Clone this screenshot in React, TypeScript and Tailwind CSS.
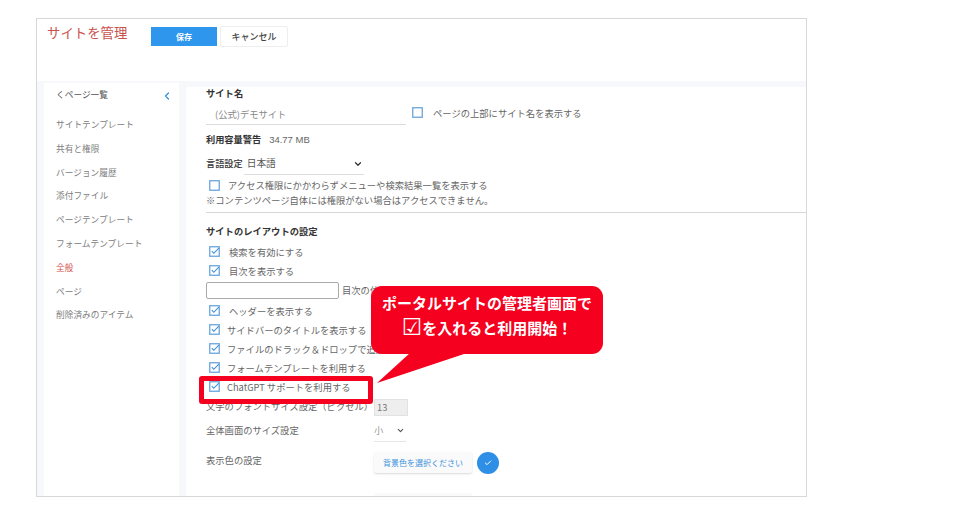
import React from "react";
import { ChevronDown, ChevronLeft, Check } from "lucide-react";

const sideItems = [
  { label: "サイトテンプレート" },
  { label: "共有と権限" },
  { label: "バージョン履歴" },
  { label: "添付ファイル" },
  { label: "ページテンプレート" },
  { label: "フォームテンプレート" },
  { label: "全般", active: true },
  { label: "ページ" },
  { label: "削除済みのアイテム" },
];

const font = "font-['Noto_Sans_CJK_JP','Liberation_Sans',sans-serif]";

// Outlined checkbox, ticked or empty
function Box({ checked = false }: { checked?: boolean }) {
  return (
    <svg width="11" height="11" viewBox="0 0 11 11" className="shrink-0">
      <rect x="0.75" y="0.75" width="9.5" height="9.5" fill="#fff" stroke="#6aa6dc" strokeWidth="1.3" />
      {checked && <path d="M2.8 5.2 L4.8 7.3 L9.8 2.2" fill="none" stroke="#3d8fd8" strokeWidth="1.1" />}
    </svg>
  );
}

function CheckRow({ label, gap }: { label: string; gap: string }) {
  return (
    <div className={`flex items-center h-[19px] pl-[3px] ${gap} text-[9.3px] text-[#666] whitespace-nowrap`}>
      <div className="-mt-[3px] flex">
        <Box checked />
      </div>
      <span>{label}</span>
    </div>
  );
}

export default function App() {
  return (
    <div className={`relative w-[971px] h-[527px] bg-white overflow-hidden ${font}`}>
      <div className="pt-[18px] pl-[36px]">
        <div className="w-[771px] h-[479px] border border-[#d8d8d8] bg-[#f6f8fc] overflow-hidden">
          {/* Header */}
          <div className="h-[62px] bg-white flex items-start pl-[10px] pt-[7px]">
            <h1 className="text-[13.4px] leading-[18px] -mt-[3px] text-[#c9524c] w-[104px]">サイトを管理</h1>
            <button className="mt-[1px] w-[66px] h-[19px] bg-[#2f96ee] text-white text-[8px] font-bold">保存</button>
            <button className="ml-[3px] w-[68px] h-[21px] bg-white border border-[#eeeeee] rounded-[2px] text-[#444] text-[9px] font-medium">
              キャンセル
            </button>
          </div>

          <div className="flex pt-[2px] pl-[7px] h-[416px]">
            {/* Sidebar */}
            <aside className="w-[135px] bg-white shrink-0 pl-[12px]">
              <div className="flex items-center justify-between h-[24px] pr-[6px] text-[8.7px] text-[#555]">
                <span>くページ一覧</span>
                <ChevronLeft size={12} strokeWidth={2.5} className="text-[#2f8fe0] mt-[2px]" />
              </div>
              <ul className="mt-[6px]">
                {sideItems.map((item) => (
                  <li
                    key={item.label}
                    className={`h-[23.8px] leading-[23.8px] text-[8.7px] ${item.active ? "text-[#d0504a]" : "text-[#808080]"}`}
                  >
                    {item.label}
                  </li>
                ))}
              </ul>
            </aside>

            {/* Main settings */}
            <main className="flex-1 ml-[7px] mt-[4px] bg-white pl-[20px] text-[#555] min-w-0">
              <div className="text-[9.3px] font-bold text-[#333] leading-[12px]">サイト名</div>
              <div className="flex items-center h-[23px] mt-[3px]">
                <div className="w-[200px] h-[23px] border-b border-[#dddddd] pl-[9px] text-[9.3px] leading-[24px] text-[#888]">
                  (公式)デモサイト
                </div>
                <div className="ml-[6px] -mt-[2px] flex">
                  <Box />
                </div>
                <span className="ml-[10px] text-[9.3px] text-[#666]">ページの上部にサイト名を表示する</span>
              </div>
              <div className="flex items-center h-[20px] mt-[5px] text-[9.2px]">
                <span className="font-bold text-[#333]">利用容量警告</span>
                <span className="ml-[8px] text-[#666] text-[9.5px] font-['Liberation_Sans',sans-serif]">34.77 MB</span>
              </div>
              <div className="flex items-center h-[22px] mt-[3px] text-[9.2px]">
                <span className="text-[#333] font-medium">言語設定</span>
                <div className="ml-[1px] w-[120px] h-[22px] border-b border-[#dddddd] flex items-center justify-between pl-[3px] pr-[1px] text-[9.7px] text-[#555]">
                  <span>日本語</span>
                  <ChevronDown size={10} strokeWidth={3} className="text-[#333]" />
                </div>
              </div>
              <div className="flex items-center h-[18px] mt-[2px] pl-[3px] text-[9.3px] text-[#666] whitespace-nowrap">
                <div className="-mt-[2px] flex">
                  <Box />
                </div>
                <span className="ml-[8px]">アクセス権限にかかわらずメニューや検索結果一覧を表示する</span>
              </div>
              <div className="h-[13px] -mt-[1px] leading-[13px] text-[9.3px] text-[#666] whitespace-nowrap">
                ※コンテンツページ自体には権限がない場合はアクセスできません。
              </div>
              <div className="h-px bg-[#d8d8d8] mt-[5px]" />

              <div className="text-[9.3px] font-bold text-[#333] leading-[18px] mt-[9px]">サイトのレイアウトの設定</div>
              <div className="mt-[3px]">
                <CheckRow label="検索を有効にする" gap="gap-[9px]" />
                <CheckRow label="目次を表示する" gap="gap-[9px]" />
              </div>
              <div className="flex items-start h-[21px] pt-[1px] text-[9.3px] text-[#666] whitespace-nowrap">
                <div className="w-[133px] h-[17px] bg-white border border-[#aaaaaa] rounded-[2px]" />
                <span className="ml-[3px] leading-[17px]">目次の位置</span>
              </div>
              <CheckRow label="ヘッダーを表示する" gap="gap-[9px]" />
              <CheckRow label="サイドバーのタイトルを表示する" gap="gap-[7px]" />
              <CheckRow label="ファイルのドラック＆ドロップで追加する" gap="gap-[7px]" />
              <CheckRow label="フォームテンプレートを利用する" gap="gap-[7px]" />
              <CheckRow label="ChatGPT サポートを利用する" gap="gap-[7px]" />
              <div className="flex items-center h-[22px] -mt-[1px] text-[9.3px] text-[#666] whitespace-nowrap">
                <span className="w-[168px]">文字のフォントサイズ設定（ピクセル）</span>
                <div className="w-[34px] h-[17px] bg-[#eeeeee] border border-[#e2e2e2] pl-[2px] leading-[15px] text-[#777]">13</div>
              </div>
              <div className="flex items-center h-[24px] mt-[1px] text-[9.3px] text-[#666]">
                <span className="w-[168px]">全体画面のサイズ設定</span>
                <div className="w-[32px] h-[22px] border-b border-[#e6e6e6] flex items-center justify-between pr-[1px] text-[#999]">
                  <span>小</span>
                  <ChevronDown size={9} strokeWidth={3} className="text-[#555]" />
                </div>
              </div>
              <div className="flex items-start h-[34px] mt-[9px] text-[9.3px] text-[#666]">
                <span className="w-[168px] leading-[16px]">表示色の設定</span>
                <div className="w-[98px] h-[21px] bg-[#fafafa] shadow-[0_1px_2px_rgba(0,0,0,0.15)] rounded-[2px] text-[#3d92dc] text-[8px] leading-[21px] text-center">
                  背景色を選択ください
                </div>
                <div className="ml-[5px] w-[22px] h-[22px] rounded-full bg-[#2f8fe6] flex items-center justify-center">
                  <Check size={8} strokeWidth={3} className="text-white" />
                </div>
              </div>
              <div className="ml-[168px] w-[98px] h-[8px] bg-[#fafafa] mt-[7px]" />
            </main>
          </div>
        </div>
      </div>

      {/* Annotation: red highlight around the ChatGPT row */}
      <div className="absolute left-[199px] top-[376px] w-[174px] h-[28px] border-[5px] border-[#f5001e] rounded-[3px]" />

      {/* Annotation: callout */}
      <div className="absolute left-[371px] top-[286px] w-[232px] h-[68px] bg-[#f5001e] rounded-[11px] pt-[4px] flex flex-col items-center text-white font-bold">
        <div className="text-[15px] leading-[25px] whitespace-nowrap">ポータルサイトの管理者画面で</div>
        <div className="text-[15px] leading-[25px] whitespace-nowrap flex items-center">
          <span className="font-['DejaVu_Sans'] font-normal text-[23px] leading-[25px]">☑</span>
          <span>を入れると利用開始！</span>
        </div>
      </div>
      <svg width="95" height="32" viewBox="0 0 95 32" className="absolute left-[375px] top-[353px]">
        <polygon points="35,0 92,0 2,30" fill="#f5001e" />
      </svg>
    </div>
  );
}
